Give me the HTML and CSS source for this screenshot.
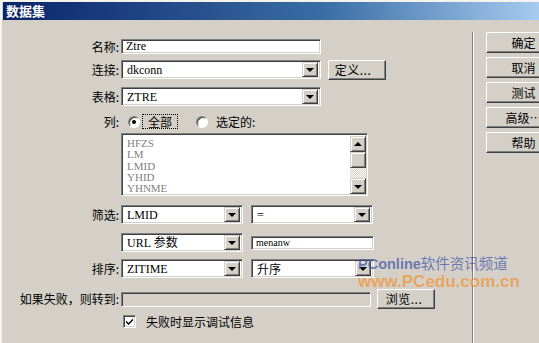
FILE: index.html
```html
<!DOCTYPE html>
<html lang="zh-CN">

<head>
    <meta charset="UTF-8">
    <title>数据集</title>
    <link rel="stylesheet" href="styles.css">
</head>

<body>
    <div class="window">
        <div class="titlebar">数据集</div>

        <div class="content">
            <div class="form">
                <div class="row r-name">
                    <span class="label">名称:</span>
                    <div class="field w200 mono">Ztre</div>
                </div>

                <div class="row r-conn">
                    <span class="label">连接:</span>
                    <div class="select w200"><span class="val mono">dkconn</span><span class="drop"></span></div>
                    <button class="btn define">定义...</button>
                </div>

                <div class="row r-table">
                    <span class="label">表格:</span>
                    <div class="select w200"><span class="val mono">ZTRE</span><span class="drop"></span></div>
                </div>

                <div class="row r-cols">
                    <span class="label">列:</span>
                    <span class="radio on"></span>
                    <span class="focus">全部</span>
                    <span class="radio second"></span>
                    <span class="radio-text">选定的:</span>
                </div>

                <div class="row r-list">
                    <span class="label"></span>
                    <div class="listbox">
                        <div class="items mono">
                            <div>HFZS</div>
                            <div>LM</div>
                            <div>LMID</div>
                            <div>YHID</div>
                            <div>YHNME</div>
                        </div>
                        <div class="scroll">
                            <span class="sbtn up"></span>
                            <span class="thumb"></span>
                            <span class="track"></span>
                            <span class="sbtn down"></span>
                        </div>
                    </div>
                </div>

                <div class="row r-filter">
                    <span class="label">筛选:</span>
                    <div class="select w122"><span class="val mono">LMID</span><span class="drop"></span></div>
                    <div class="select w122 second-col"><span class="val mono">=</span><span class="drop"></span></div>
                </div>

                <div class="row r-param">
                    <span class="label"></span>
                    <div class="select w122"><span class="val"><span class="mono">URL</span> 参数</span><span class="drop"></span></div>
                    <div class="field small w123 second-col mono">menanw</div>
                </div>

                <div class="row r-sort">
                    <span class="label">排序:</span>
                    <div class="select w122"><span class="val mono">ZITIME</span><span class="drop"></span></div>
                    <div class="select w123 second-col"><span class="val">升序</span><span class="drop"></span></div>
                </div>

                <div class="row r-fail">
                    <span class="label">如果失败，则转到:</span>
                    <div class="field disabled w250"></div>
                    <button class="btn browse">浏览...</button>
                </div>

                <div class="row r-check">
                    <span class="checkbox">
                        <svg width="9" height="9" viewBox="0 0 9 9">
                            <path d="M1 3.5 L3.5 6 L8 1.5 L8 3.5 L3.5 8 L1 5.5 Z" fill="#000"/>
                        </svg>
                    </span>
                    <span class="check-text">失败时显示调试信息</span>
                </div>
            </div>

            <div class="sep"></div>

            <div class="side">
                <button class="btn side-btn">确定</button>
                <button class="btn side-btn">取消</button>
                <button class="btn side-btn">测试</button>
                <button class="btn side-btn">高级…</button>
                <button class="btn side-btn">帮助</button>
            </div>
        </div>

        <div class="watermark">
            <div class="wm-top"><b>PConline</b>软件资讯频道</div>
            <div class="wm-bottom">www.PCedu.com.cn</div>
        </div>
    </div>
</body>

</html>
```

FILE: styles.css
```css
* {
    margin: 0;
    padding: 0;
    box-sizing: border-box;
}

html,
body {
    width: 539px;
    height: 343px;
    overflow: hidden;
}

body {
    background: #d4d0c8;
    font-family: "Noto Sans CJK SC", "Liberation Sans", sans-serif;
    font-size: 12px;
    color: #000;
}

.window {
    position: relative;
    height: 343px;
    border-top: 2px solid #f4f3ee;
    border-left: 2px solid #f4f3ee;
}

.titlebar {
    height: 18px;
    margin-left: 1px;
    padding-left: 3px;
    line-height: 18px;
    font-size: 13px;
    font-weight: bold;
    color: #fff;
    background: linear-gradient(to right, #0a246a 0%, #3a6ea5 60%, #a6caf0 100%);
}

.content {
    display: flex;
    height: 323px;
}

.form {
    width: 470px;
    flex-shrink: 0;
    display: flex;
    flex-direction: column;
}

.row {
    display: flex;
    align-items: center;
}

.label {
    width: 117px;
    flex-shrink: 0;
    margin-right: 2px;
    text-align: right;
    white-space: nowrap;
    line-height: 14px;
}

/* row spacing */
.r-name { margin-top: 19px; height: 15px; }
.r-conn { margin-top: 6px; height: 19px; }
.r-table { margin-top: 8px; height: 19px; }
.r-cols { margin-top: 8px; height: 15px; }
.r-list { margin-top: 4px; height: 63px; align-items: stretch; }
.r-filter { margin-top: 9px; height: 19px; }
.r-param { margin-top: 9px; height: 19px; }
.r-sort { margin-top: 7px; height: 19px; }
.r-fail { margin-top: 11px; height: 20px; }
.r-check { margin-top: 6px; height: 13px; }

.mono {
    font-family: "Liberation Serif", "DejaVu Serif", serif;
    font-size: 12px;
}

.w200 { width: 200px; }
.w122 { width: 122px; }
.w123 { width: 123px; }
.w250 { width: 250px; }

.second-col {
    margin-left: 8px;
}

/* sunken fields */
.field,
.select,
.listbox {
    background: #fff;
    border: 1px solid;
    border-color: #808080 #fff #fff #808080;
    box-shadow: inset 1px 1px #404040, inset -1px -1px #d4d0c8;
}

.field {
    height: 15px;
    padding-left: 4px;
    line-height: 13px;
}

.field.small {
    height: 14px;
    font-size: 10px;
    line-height: 12px;
}

.field.disabled {
    background: #d4d0c8;
}

.select {
    height: 19px;
    display: flex;
    align-items: center;
    padding: 2px;
}

.select .val {
    flex: 1;
    padding-left: 3px;
    line-height: 14px;
    white-space: nowrap;
}

.drop,
.sbtn,
.thumb {
    display: flex;
    align-items: center;
    justify-content: center;
    background: #d4d0c8;
    border: 1px solid;
    border-color: #d4d0c8 #404040 #404040 #d4d0c8;
    box-shadow: inset 1px 1px #fff, inset -1px -1px #808080;
}

.drop {
    width: 16px;
    height: 15px;
}

.drop::after,
.sbtn.down::after {
    content: "";
    border-left: 4px solid transparent;
    border-right: 4px solid transparent;
    border-top: 4px solid #000;
    margin-top: 1px;
}

.sbtn.up::after {
    content: "";
    border-left: 4px solid transparent;
    border-right: 4px solid transparent;
    border-bottom: 4px solid #000;
}

/* buttons */
.btn {
    font-family: "Noto Sans CJK SC", "Liberation Sans", sans-serif;
    font-size: 12px;
    background: #d4d0c8;
    color: #000;
    border: 1px solid;
    border-color: #fff #404040 #404040 #fff;
    box-shadow: inset -1px -1px #808080, inset 1px 1px #d4d0c8;
    line-height: 14px;
}

.define {
    width: 58px;
    height: 20px;
    margin-left: 7px;
    padding-right: 8px;
    letter-spacing: 0.5px;
}

.browse {
    width: 58px;
    height: 20px;
    margin-left: 6px;
    padding-right: 4px;
    letter-spacing: 0.5px;
}

/* radio row */
.radio {
    width: 12px;
    height: 12px;
    margin-left: 7px;
    border-radius: 50%;
    background: #fff;
    border: 1px solid;
    border-color: #808080 #fff #fff #808080;
    box-shadow: inset 1px 1px #404040;
    display: flex;
    align-items: center;
    justify-content: center;
}

.radio.on::after {
    content: "";
    width: 4px;
    height: 4px;
    border-radius: 50%;
    background: #000;
}

.radio.second {
    margin-left: 18px;
}

.focus {
    margin-left: 2px;
    padding: 0 5px;
    border: 1px dotted #000;
    line-height: 13px;
    height: 15px;
}

.radio-text {
    margin-left: 8px;
}

/* listbox */
.listbox {
    width: 247px;
    display: flex;
    padding: 2px 1px 1px 2px;
}

.items {
    flex: 1;
    color: #808080;
    padding: 2px 0 0 3px;
    line-height: 11.3px;
    font-size: 11px;
}

.scroll {
    width: 16px;
    display: flex;
    flex-direction: column;
}

.sbtn,
.thumb {
    width: 16px;
    height: 16px;
    flex-shrink: 0;
}

.track {
    flex: 1;
    background: repeating-conic-gradient(#d4d0c8 0 25%, #fff 0 50%) 0 0 / 2px 2px;
}

/* checkbox */
.checkbox {
    width: 13px;
    height: 13px;
    margin-left: 121px;
    background: #fff;
    border: 1px solid;
    border-color: #808080 #fff #fff #808080;
    box-shadow: inset 1px 1px #404040, inset -1px -1px #d4d0c8;
    display: flex;
    align-items: center;
    justify-content: center;
}

.check-text {
    margin-left: 10px;
    line-height: 14px;
}

/* right column */
.sep {
    width: 2px;
    flex-shrink: 0;
    margin-top: 12px;
    border-left: 1px solid #808080;
    border-right: 1px solid #fff;
}

.side {
    display: flex;
    flex-direction: column;
    flex-shrink: 0;
    gap: 4px;
    padding-top: 12px;
    padding-left: 12px;
}

.side-btn {
    width: 75px;
    height: 21px;
    flex-shrink: 0;
}

/* watermark over the sort row */
.watermark {
    position: absolute;
    left: 356px;
    top: 254px;
    pointer-events: none;
    font-family: "Liberation Sans", "Noto Sans CJK SC", sans-serif;
    line-height: 17px;
}

.wm-top {
    font-size: 14.5px;
    color: rgba(70, 90, 170, 0.75);
}

.wm-top b {
    font-weight: bold;
}

.wm-bottom {
    font-size: 17px;
    font-weight: bold;
    color: rgba(240, 150, 60, 0.75);
}
```
